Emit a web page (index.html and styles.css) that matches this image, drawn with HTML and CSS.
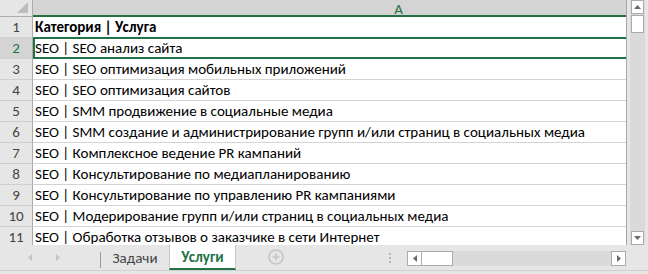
FILE: index.html
```html
<!DOCTYPE html>
<html lang="ru">
<head>
<meta charset="utf-8">
<title>Услуги</title>
<link rel="stylesheet" href="styles.css">
</head>
<body>
<div class="excel">
  <div class="top">
    <div class="sheet">
      <div class="hdr-row">
        <div class="corner">
          <svg class="corner-tri" width="11" height="11" viewBox="0 0 11 11"><polygon points="11,0 11,11 0,11" fill="#bcbcbc"/></svg>
        </div>
        <div class="col-hdr sel">A</div>
      </div>
      <div class="row"><div class="rh">1</div><div class="cell bold">Категория | Услуга</div></div>
      <div class="row sel"><div class="rh">2</div><div class="cell active">SEO | SEO анализ сайта</div></div>
      <div class="row"><div class="rh">3</div><div class="cell">SEO | SEO оптимизация мобильных приложений</div></div>
      <div class="row"><div class="rh">4</div><div class="cell">SEO | SEO оптимизация сайтов</div></div>
      <div class="row"><div class="rh">5</div><div class="cell">SEO | SMM продвижение в социальные медиа</div></div>
      <div class="row"><div class="rh">6</div><div class="cell">SEO | SMM создание и администрирование групп и/или страниц в социальных медиа</div></div>
      <div class="row"><div class="rh">7</div><div class="cell">SEO | Комплексное ведение PR кампаний</div></div>
      <div class="row"><div class="rh">8</div><div class="cell">SEO | Консультирование по медиапланированию</div></div>
      <div class="row"><div class="rh">9</div><div class="cell">SEO | Консультирование по управлению PR кампаниями</div></div>
      <div class="row"><div class="rh">10</div><div class="cell">SEO | Модерирование групп и/или страниц в социальных медиа</div></div>
      <div class="row"><div class="rh">11</div><div class="cell">SEO | Обработка отзывов о заказчике в сети Интернет</div></div>
    </div>
    <div class="vscroll">
      <div class="vtrack">
        <div class="sbtn vbtn"><svg width="7" height="4" viewBox="0 0 7 4"><polygon points="0,4 7,4 3.5,0" fill="#6a6a6a"/></svg></div>
        <div class="vthumb"></div>
        <div class="vfill"></div>
        <div class="sbtn vbtn"><svg width="7" height="4" viewBox="0 0 7 4"><polygon points="0,0 7,0 3.5,4" fill="#6a6a6a"/></svg></div>
      </div>
    </div>
  </div>
  <div class="tabbar">
    <div class="nav">
      <svg class="nav-l" width="4" height="7" viewBox="0 0 4 7"><polygon points="4,0 4,7 0,3.5" fill="#c4c4c4"/></svg>
      <svg class="nav-r" width="4" height="7" viewBox="0 0 4 7"><polygon points="0,0 0,7 4,3.5" fill="#c4c4c4"/></svg>
    </div>
    <div class="sep"></div>
    <div class="tab">Задачи</div>
    <div class="tab current">Услуги</div>
    <div class="add">
      <svg width="16" height="16" viewBox="0 0 16 16"><circle cx="8" cy="8" r="7" fill="none" stroke="#c6c6c6" stroke-width="1.5"/><path d="M8 4.5v7M4.5 8h7" stroke="#c6c6c6" stroke-width="1.6"/></svg>
    </div>
    <div class="dots"><span></span><span></span><span></span></div>
    <div class="hscroll">
      <div class="sbtn hbtn"><svg width="4" height="7" viewBox="0 0 4 7"><polygon points="4,0 4,7 0,3.5" fill="#6a6a6a"/></svg></div>
      <div class="hthumb"></div>
      <div class="hfill"></div>
      <div class="sbtn hbtn"><svg width="4" height="7" viewBox="0 0 4 7"><polygon points="0,0 0,7 4,3.5" fill="#6a6a6a"/></svg></div>
    </div>
    <div class="corner-r"></div>
  </div>
  <div class="status"></div>
</div>
</body>
</html>
```
FILE: styles.css
```css
* { box-sizing: border-box; }
html, body { margin: 0; padding: 0; }
body {
  width: 648px;
  height: 274px;
  overflow: hidden;
  background: #e6e6e6;
  font-family: Carlito, Lato, "Liberation Sans", sans-serif;
}
.excel { width: 648px; height: 274px; display: flex; flex-direction: column; }
.top { display: flex; height: 245px; }
.sheet {
  width: 627px;
  height: 245px;
  overflow: hidden;
  background: #fff;
  border-right: 1px solid #a6a6a6;
}
.hdr-row { display: flex; height: 17px; }
.corner {
  width: 33px;
  flex: none;
  height: 17px;
  background: #e6e6e6;
  border-right: 1px solid #ababab;
  border-bottom: 1px solid #ababab;
  display: flex;
  align-items: flex-end;
  justify-content: flex-end;
  padding: 0 4px 3px 0;
}
.corner-tri { display: block; }
.col-hdr {
  flex: 1;
  height: 17px;
  padding-left: 138px;
  background: #d4d4d4;
  box-shadow: inset 0 -2px 0 #217346;
  color: #217346;
  font-size: 15px;
  line-height: 19px;
  text-align: center;
}
.row { display: flex; height: 21px; }
.rh {
  width: 33px;
  flex: none;
  height: 21px;
  background: #e6e6e6;
  border-right: 1px solid #ababab;
  border-bottom: 1px solid #cfcfcf;
  color: #444;
  font-size: 15px;
  line-height: 20px;
  text-align: center;
}
.row.sel .rh { background: #d4d4d4; color: #217346; }
.cell {
  flex: 1;
  height: 21px;
  border-bottom: 1px solid #d4d4d4;
  padding-left: 2px;
  font-size: 15px;
  line-height: 20px;
  color: #000;
  white-space: nowrap;
  position: relative;
}
.cell.bold { font-weight: bold; }
.cell.active::after {
  content: "";
  position: absolute;
  left: 0;
  right: -2px;
  top: -1px;
  bottom: -1px;
  border: 2px solid #217346;
}
.vscroll {
  width: 21px;
  height: 245px;
  background: #e6e6e6;
  padding: 0 3px;
}
.vtrack {
  height: 245px;
  background: #dadada;
  display: flex;
  flex-direction: column;
  padding: 0 1px;
}
.sbtn {
  background: #fff;
  border: 1px solid #ababab;
  display: flex;
  align-items: center;
  justify-content: center;
}
.sbtn svg { display: block; }
.vbtn { height: 14px; flex: none; }
.vthumb {
  height: 18px;
  margin-top: 1px;
  background: #fff;
  border: 1px solid #ababab;
}
.vfill { flex: 1; }
.tabbar {
  height: 26px;
  display: flex;
  align-items: stretch;
  border-bottom: 1px solid #d0d0d0;
  background: #e6e6e6;
}
.nav {
  width: 100px;
  flex: none;
  display: flex;
  align-items: center;
  padding-left: 28px;
}
.nav svg { display: block; }
.nav-r { margin-left: 24px; }
.sep {
  width: 1px;
  flex: none;
  margin: 7px 0 2px;
  background: #9a9a9a;
}
.tab {
  width: 68px;
  flex: none;
  text-align: center;
  font-size: 15px;
  line-height: 26px;
  color: #444;
}
.tab.current {
  width: 67px;
  background: #fff;
  border-left: 1px solid #c6c6c6;
  border-right: 1px solid #c6c6c6;
  border-bottom: 2px solid #217346;
  color: #217346;
  font-weight: bold;
  line-height: 24px;
}
.add {
  margin-left: 32px;
  display: flex;
  align-items: center;
  padding-bottom: 1px;
}
.add svg { display: block; }
.dots {
  margin-left: auto;
  margin-right: 16px;
  display: flex;
  flex-direction: column;
  justify-content: center;
  gap: 2px;
}
.dots span { display: block; width: 2px; height: 2px; background: #b4b4b4; }
.hscroll {
  width: 219px;
  flex: none;
  margin: 6px 0 4px;
  background: #dadada;
  display: flex;
}
.hbtn { width: 15px; flex: none; }
.hthumb {
  width: 32px;
  margin-left: -1px;
  background: #fff;
  border: 1px solid #ababab;
}
.hfill { flex: 1; }
.corner-r { width: 22px; flex: none; }
.status { flex: 1; background: #e6e6e6; }
```
